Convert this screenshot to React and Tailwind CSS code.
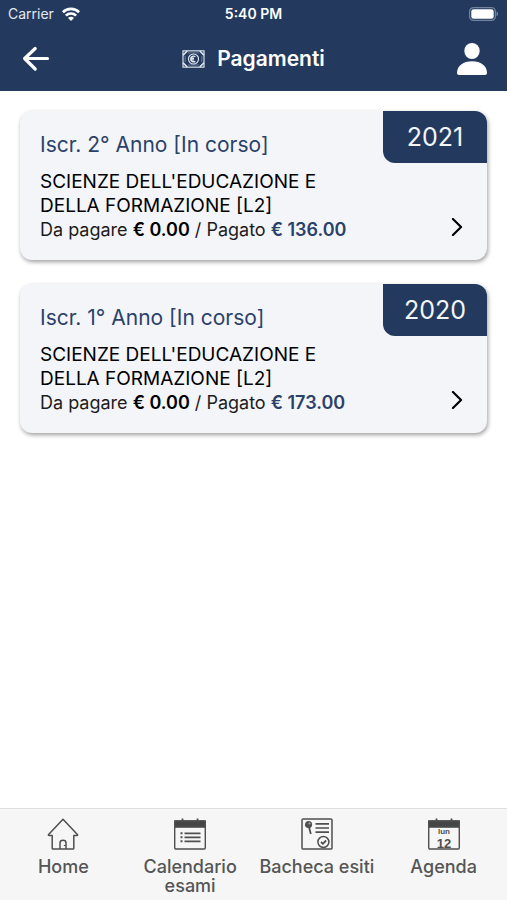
const payments = [
  { year: "2021", title: "Iscr. 2° Anno [In corso]", course: "SCIENZE DELL'EDUCAZIONE E DELLA FORMAZIONE [L2]", due: "€ 0.00", paid: "€ 136.00" },
  { year: "2020", title: "Iscr. 1° Anno [In corso]", course: "SCIENZE DELL'EDUCAZIONE E DELLA FORMAZIONE [L2]", due: "€ 0.00", paid: "€ 173.00" },
];

function WifiIcon() {
  return (
    <svg className="h-[14px] w-[18px]" viewBox="0 0 18 14" fill="none" stroke="#fff" strokeWidth="2.7" aria-hidden="true">
      <path d="M0.900 5.200a11.500 11.500 0 0 1 16.200 0" />
      <path d="M3.900 8.600a7.300 7.300 0 0 1 10.200 0" />
      <path d="M6 11a4.200 4.200 0 0 1 6 0l-3 3z" fill="#fff" stroke="none" />
    </svg>
  );
}

function BatteryIcon() {
  return (
    <svg className="h-[14px] w-[30px]" viewBox="0 0 30 14" fill="none" aria-hidden="true">
      <rect x="0.6" y="0.6" width="25.8" height="12.8" rx="4" stroke="#74849f" strokeWidth="1.2" />
      <rect x="2.3" y="2.3" width="22.4" height="9.4" rx="2.3" fill="#fff" />
      <path d="M27.6 4.8c1.8.6 1.8 3.8 0 4.4z" fill="#8493ad" />
    </svg>
  );
}

function BackIcon() {
  return (
    <svg className="h-[26px] w-7" viewBox="0 0 28 26" fill="none" stroke="currentColor" strokeWidth="3.200" strokeLinecap="round" strokeLinejoin="round" aria-hidden="true">
      <path d="M13.200 2.500 2.600 12.500l10.600 10.500M3.200 12.500h22.300" />
    </svg>
  );
}

function BanknoteIcon() {
  return (
    <svg className="h-[18px] w-[23px]" viewBox="0 0 24 19" fill="none" stroke="#e3e8f0" strokeWidth="1.2" aria-hidden="true">
      <rect x="0.9" y="0.9" width="22.2" height="17.2" />
      <path d="M6 3.200h12M6 15.800h12M3.200 6v7M20.800 6v7" opacity="0.35" />
      <path d="M1 5.400 5.400 1M18.600 1 23 5.400M1 13.600 5.400 18M18.600 18l4.400-4.400" strokeWidth="1.600" />
      <circle cx="12" cy="9.500" r="5.300" />
      <path d="M14 6.900c-3.400-1.400-5.300 1-4.800 3.200.4 2 2.400 3 4.800 1.900M8.500 8.700h4M8.500 10.400h4" strokeWidth="1.500" />
    </svg>
  );
}

function UserIcon() {
  return (
    <svg className="h-8 w-[30px]" viewBox="0 0 30 32" fill="currentColor" aria-hidden="true">
      <ellipse cx="15" cy="8" rx="7.7" ry="8" />
      <path d="M0 30c0-7.200 6.400-11.700 15-11.700S30 22.800 30 30c0 1.300-.8 2-2 2H2c-1.200 0-2-.7-2-2z" />
    </svg>
  );
}

function HomeIcon() {
  return (
    <svg className="h-8 w-8" viewBox="0 0 32 32" fill="none" stroke="#4f4f4f" strokeWidth="1.5" strokeLinejoin="round" aria-hidden="true">
      <path d="M16 1.300 1.600 16.500c-.5.600-.2 1 .5 1H5.200v12.700c0 .5.300.8.800.8h20c.5 0 .8-.3.800-.8V17.500h3.100c.7 0 1-.4.500-1z" />
      <path d="M13 31v-6.200c0-1.800.8-2.600 3-2.600s3 .8 3 2.600V31M17.600 27v1" />
    </svg>
  );
}

function CalendarFrame({ children }) {
  return (
    <svg className="h-8 w-8" viewBox="0 0 32 32" fill="none" stroke="#4f4f4f" strokeWidth="1.400" aria-hidden="true">
      <path d="M8.500 4V0.500M23.500 4V0.500" strokeWidth="1.800" />
      <rect x="0.700" y="3" width="30.600" height="28" rx="1.200" />
      <rect x="0.700" y="3" width="30.600" height="6.100" fill="#454545" />
      {children}
    </svg>
  );
}

function ExamCalendarIcon() {
  return (
    <CalendarFrame>
      <path d="M10.500 15.300h16M10.500 19.300h16M10.500 23.300h16" strokeWidth="1.700" />
      <path d="M6.500 15.300h2M6.500 19.300h2M6.500 23.300h2" strokeWidth="1.900" />
    </CalendarFrame>
  );
}

function AgendaIcon() {
  return (
    <CalendarFrame>
      <g fill="#4f4f4f" stroke="none" textAnchor="middle" className="font-['Liberation_Sans',sans-serif] font-bold">
        <text x="16" y="16" fontSize="8">lun</text>
        <text x="16" y="30" fontSize="13">12</text>
      </g>
    </CalendarFrame>
  );
}

function NoticeIcon() {
  return (
    <svg className="h-8 w-8" viewBox="0 0 32 32" fill="none" stroke="#4f4f4f" strokeWidth="1.500" aria-hidden="true">
      <rect x="1" y="0.900" width="30" height="30.200" rx="1.200" />
      <path d="M14.500 5.800H28M14.500 10H28M14.500 14.200H28" strokeWidth="1.700" />
      <circle cx="7.600" cy="6.400" r="3.500" fill="#4f4f4f" stroke="none" />
      <path d="M4.300 6.700 8.800 10M8 9l1.800 7" strokeWidth="1.800" />
      <circle cx="8.500" cy="5.500" r="1.100" fill="#aaa" stroke="none" />
      <circle cx="22.400" cy="24" r="5.500" />
      <path d="m20 24 1.900 1.800 3.200-3.300" strokeWidth="1.800" />
    </svg>
  );
}

const tabs = [
  { label: "Home", Icon: HomeIcon },
  { label: "Calendario esami", Icon: ExamCalendarIcon },
  { label: "Bacheca esiti", Icon: NoticeIcon },
  { label: "Agenda", Icon: AgendaIcon },
];

function PaymentCard({ payment }) {
  return (
    <article className="relative rounded-xl bg-[#f3f5f9] px-5 pt-5 pb-[18px] shadow-[1px_2px_4px_rgba(0,0,0,0.38)]">
      <span className="absolute top-0 right-0 flex h-[52px] w-[104px] items-center justify-center rounded-tr-xl rounded-bl-xl bg-[#233a5e] pt-0.5 text-[25px] text-[#f3f5f9]">
        {payment.year}
      </span>
      <h2 className="text-[21px] leading-7 text-[#2c4169]">{payment.title}</h2>
      <p className="mt-[11px] w-[300px] text-[19px] leading-6 text-black">{payment.course}</p>
      <div className="flex items-center justify-between">
        <p className="text-[18px] leading-6 text-[#1c1c1c]">
          Da pagare <strong className="font-semibold text-black">{payment.due}</strong> / Pagato{" "}
          <strong className="font-semibold text-[#2c4169]">{payment.paid}</strong>
        </p>
        <button type="button" aria-label={"Dettagli " + payment.year} className="flex h-6 w-5 items-start justify-center text-black">
          <svg className="h-[18px] w-3" viewBox="0 0 12 20" fill="none" stroke="currentColor" strokeWidth="2.400" strokeLinecap="round" strokeLinejoin="round" aria-hidden="true">
            <path d="m1.500 1 9 9-9 9" />
          </svg>
        </button>
      </div>
    </article>
  );
}

export default function App() {
  return (
    <div className="flex min-h-screen flex-col bg-white font-[Inter,sans-serif]">
      <header className="bg-[#233a5e] text-white">
        <div className="grid h-[27px] grid-cols-3 items-center px-2 text-[14px] leading-5">
          <div className="flex items-center gap-2 text-[#e3e8f0]">
            <span>Carrier</span>
            <WifiIcon />
          </div>
          <span className="text-center font-semibold">5:40 PM</span>
          <div className="flex justify-end">
            <BatteryIcon />
          </div>
        </div>
        <div className="flex h-16 items-center justify-between px-5">
          <button type="button" aria-label="Indietro" className="pl-0.5">
            <BackIcon />
          </button>
          <h1 className="flex items-center gap-3 text-[21px] leading-7 font-semibold">
            <BanknoteIcon />
            Pagamenti
          </h1>
          <button type="button" aria-label="Profilo">
            <UserIcon />
          </button>
        </div>
      </header>
      <main className="flex grow flex-col gap-6 p-5">
        {payments.map((payment) => (
          <PaymentCard key={payment.year} payment={payment} />
        ))}
      </main>
      <nav className="grid min-h-[92px] grid-cols-4 border-t border-[#dedede] bg-[#f6f6f6] pt-[9px]">
        {tabs.map(({ label, Icon }) => (
          <a key={label} href="#" className="flex flex-col items-center gap-[7px] text-center text-[18px] leading-[19px] font-medium text-[#555]">
            <Icon />
            <span>{label}</span>
          </a>
        ))}
      </nav>
    </div>
  );
}
